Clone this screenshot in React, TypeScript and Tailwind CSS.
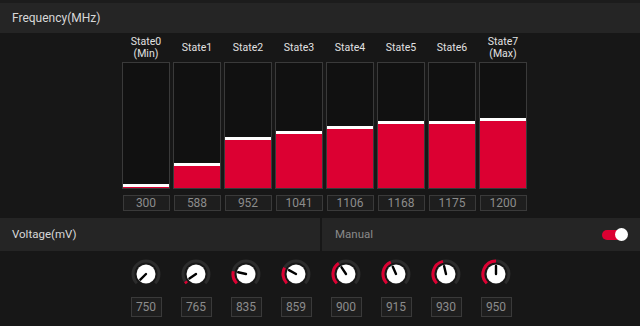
const states = [
  { label: "State0", sub: "(Min)", value: 300, fill: 4 },
  { label: "State1", value: 588, fill: 25 },
  { label: "State2", value: 952, fill: 51 },
  { label: "State3", value: 1041, fill: 57 },
  { label: "State4", value: 1106, fill: 62 },
  { label: "State5", value: 1168, fill: 67 },
  { label: "State6", value: 1175, fill: 67 },
  { label: "State7", sub: "(Max)", value: 1200, fill: 70 },
];

const voltages = [750, 765, 835, 859, 900, 915, 930, 950];

function pt(r: number, deg: number) {
  const a = (deg * Math.PI) / 180;
  return [15 + r * Math.sin(a), 15 - r * Math.cos(a)];
}

function arc(r: number, from: number, to: number) {
  const [x1, y1] = pt(r, from);
  const [x2, y2] = pt(r, to);
  const large = to - from > 180 ? 1 : 0;
  return `M ${x1} ${y1} A ${r} ${r} 0 ${large} 1 ${x2} ${y2}`;
}

function Knob({ value }: { value: number }) {
  const angle = -135 + ((value - 750) / 400) * 270;
  const [px, py] = pt(8, angle);
  return (
    <svg width="30" height="30" viewBox="0 0 30 30">
      <path d={arc(13, -135, 135)} fill="none" stroke="#2c2c2c" strokeWidth="3" />
      {angle > -133 && <path d={arc(13, -135, angle)} fill="none" stroke="#dc0032" strokeWidth="3" />}
      <circle cx="15" cy="15" r="9.5" fill="#ffffff" />
      <line x1="15" y1="15" x2={px} y2={py} stroke="#000" strokeWidth="2.4" strokeLinecap="round" />
    </svg>
  );
}

export default function App() {
  return (
    <div className="w-[640px] h-[326px] bg-[#171717] overflow-hidden" style={{ fontFamily: "Roboto, 'Open Sans', sans-serif" }}>
      <div className="h-[3px] bg-[#1c1c1c]" />
      <div className="h-[30px] bg-[#252525] flex items-center pl-[12px] text-[12px] text-[#d8d8d8]">Frequency(MHz)</div>

      <div className="flex gap-[3px] pl-[122px]">
        {states.map((s) => (
          <div key={s.label} className="w-[48px] flex flex-col items-center">
            <div className="h-[29px] flex flex-col items-center justify-center text-[10.5px] leading-[12px] text-[#e2e2e2]">
              <span>{s.label}</span>
              {s.sub && <span>{s.sub}</span>}
            </div>
            <div className="w-[48px] h-[127px] border border-[#3a3a3a] bg-[#111111] flex flex-col justify-end">
              <div className="bg-[#dc0032] border-t-[3px] border-white" style={{ height: s.fill }} />
            </div>
            <div className="mt-[6px] w-[47px] h-[16px] border border-[#3a3a3a] bg-[#1e1e1e] flex items-center justify-center text-[12px] text-[#8c8c8c]">
              {s.value}
            </div>
          </div>
        ))}
      </div>

      <div className="mt-[7px] h-[33px] flex gap-[2px]">
        <div className="w-[320px] bg-[#252525] flex items-center pl-[12px] text-[11.5px] text-[#d8d8d8]">Voltage(mV)</div>
        <div className="flex-1 bg-[#252525] flex items-center pl-[13px] pr-[14px] text-[11.5px] text-[#8a8a8a]">
          <span>Manual</span>
          <div className="ml-auto relative w-[24px] h-[12px]">
            <div className="absolute left-0 top-[1px] w-[22px] h-[10px] rounded-full bg-[#dc0032]" />
            <div className="absolute right-[-2px] top-[-1px] w-[13px] h-[13px] rounded-full bg-white" />
          </div>
        </div>
      </div>

      <div className="flex pl-[121px] pt-[8px]">
        {voltages.map((v) => (
          <div key={v} className="w-[50px] flex flex-col items-center">
            <Knob value={v} />
            <div className="mt-[8px] w-[31px] h-[20px] border border-[#3a3a3a] bg-[#1e1e1e] flex items-center justify-center text-[12px] text-[#8c8c8c]">
              {v}
            </div>
          </div>
        ))}
      </div>
    </div>
  );
}
